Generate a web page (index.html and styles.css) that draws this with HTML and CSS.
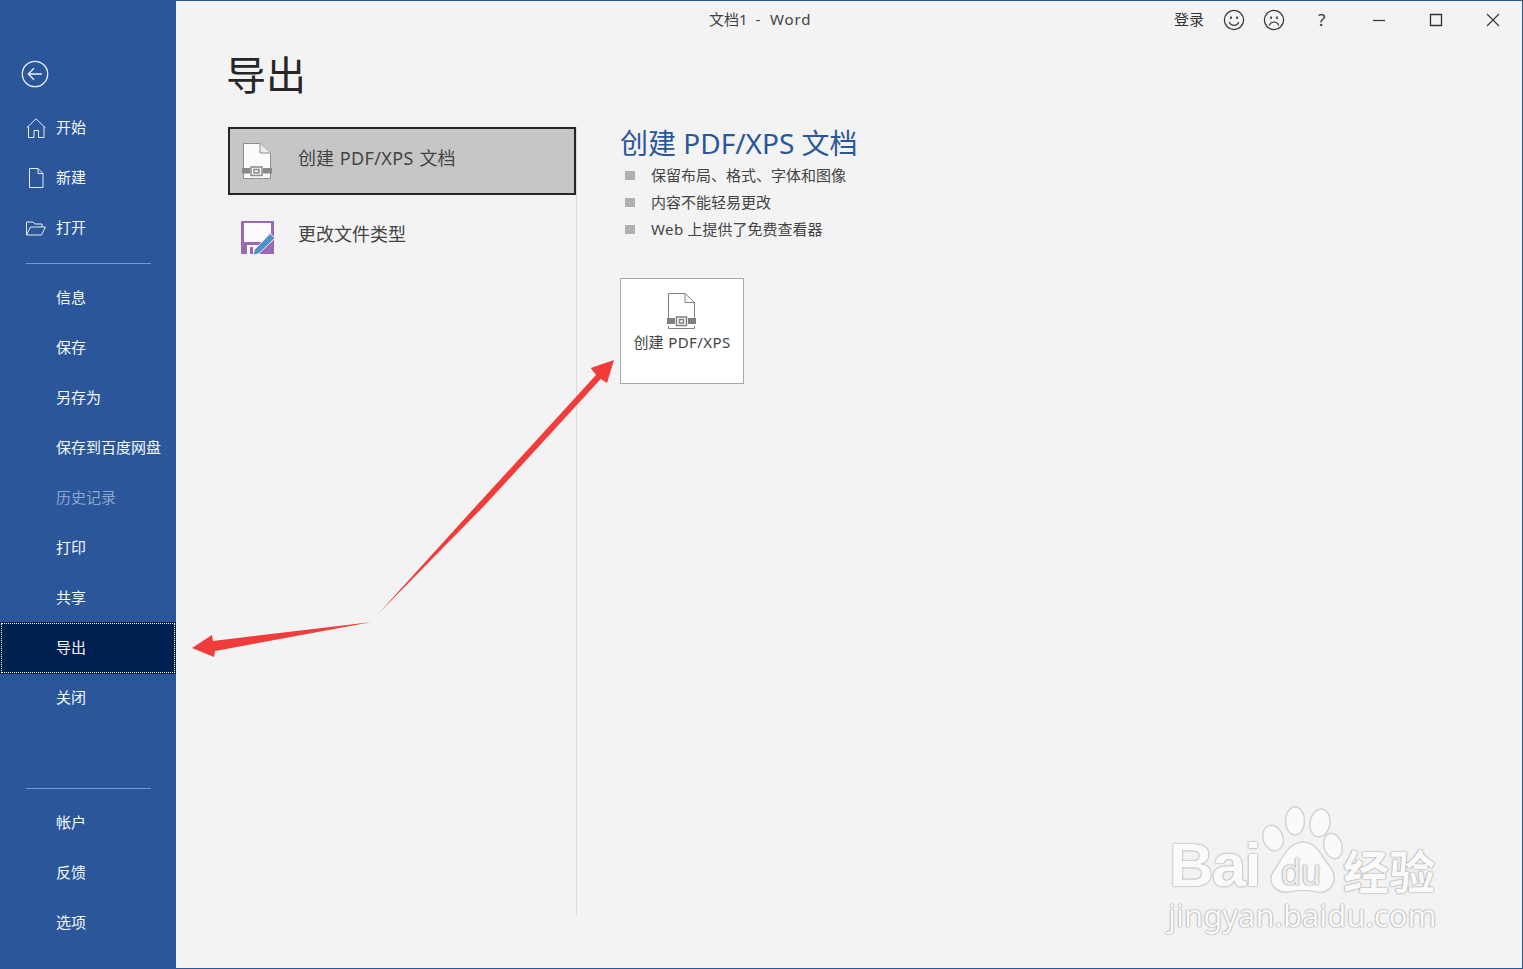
FILE: index.html
```html
<!DOCTYPE html>
<html lang="zh-CN">
<head>
<meta charset="utf-8">
<title>文档1 - Word</title>
<link rel="stylesheet" href="styles.css">
</head>
<body>
<div class="window">
  <aside class="sidebar">
    <div class="back">
      <svg width="28" height="28" viewBox="0 0 28 28" fill="none" stroke="#e8f0fa" stroke-width="1.3"><circle cx="14" cy="14" r="12.7"/><path d="M21 14H7.5M13 8.2 7.3 14l5.7 5.8"/></svg>
    </div>
    <nav class="nav-group">
      <div class="nav-item"><span class="nav-icon"><svg width="22" height="22" viewBox="0 0 22 22" fill="none" stroke="#e4edf8" stroke-width="1"><path d="M1.5 11 11 1.8 20.5 11M3.5 9.5V20.5H9V13.5H13.5V20.5H19V9.5"/></svg></span>开始</div>
      <div class="nav-item"><span class="nav-icon"><svg width="22" height="22" viewBox="0 0 22 22" fill="none" stroke="#e4edf8" stroke-width="1"><path d="M4.5 1.5H13L18 6.5V20.5H4.5ZM13 1.5V6.5H18"/></svg></span>新建</div>
      <div class="nav-item"><span class="nav-icon"><svg width="22" height="22" viewBox="0 0 22 22" fill="none" stroke="#e4edf8" stroke-width="1"><path d="M1.5 18V5H8L10 7H17V10M1.5 18H16.5L20.5 10H5.5Z"/></svg></span>打开</div>
    </nav>
    <div class="divider"></div>
    <nav class="nav-group nav-mid">
      <div class="nav-item">信息</div>
      <div class="nav-item">保存</div>
      <div class="nav-item">另存为</div>
      <div class="nav-item">保存到百度网盘</div>
      <div class="nav-item disabled">历史记录</div>
      <div class="nav-item">打印</div>
      <div class="nav-item">共享</div>
      <div class="nav-item active">导出</div>
      <div class="nav-item">关闭</div>
    </nav>
    <div class="divider divider-low"></div>
    <nav class="nav-group nav-bottom">
      <div class="nav-item">帐户</div>
      <div class="nav-item">反馈</div>
      <div class="nav-item">选项</div>
    </nav>
  </aside>

  <main class="main">
    <header class="titlebar">
      <div class="doc-title">文档1&nbsp; -&nbsp; <span class="word">Word</span></div>
      <div class="controls">
        <span class="signin">登录</span>
        <svg class="ctl face" width="22" height="22" viewBox="0 0 22 22" fill="none" stroke="#333" stroke-width="1.2"><circle cx="11" cy="11" r="9.6"/><path d="M8 7.5v2.6M14 7.5v2.6" stroke-width="1.6"/><path d="M6.2 13c1 2.4 2.8 3.4 4.8 3.4s3.8-1 4.8-3.4"/></svg>
        <svg class="ctl face" width="22" height="22" viewBox="0 0 22 22" fill="none" stroke="#333" stroke-width="1.2"><circle cx="11" cy="11" r="9.6"/><path d="M8 7.5v2.6M14 7.5v2.6" stroke-width="1.6"/><path d="M6.2 16.4c1-2.4 2.8-3.4 4.8-3.4s3.8 1 4.8 3.4"/></svg>
        <span class="help">?</span>
        <svg class="win-btn" width="14" height="14" viewBox="0 0 14 14" fill="none" stroke="#333" stroke-width="1.2"><path d="M1 7.5H13"/></svg>
        <svg class="win-btn" width="14" height="14" viewBox="0 0 14 14" fill="none" stroke="#333" stroke-width="1.3"><path d="M1.5 1.5H12.5V12.5H1.5Z"/></svg>
        <svg class="win-btn" width="14" height="14" viewBox="0 0 14 14" fill="none" stroke="#333" stroke-width="1.1"><path d="M1 1 13 13M13 1 1 13"/></svg>
      </div>
    </header>
    <h1 class="page-title">导出</h1>
    <div class="columns">
      <section class="options">
        <div class="option selected">
          <svg class="opt-icon" width="30" height="36" viewBox="0 0 30 36"><path d="M1.500 .5H18L28.500 10V35.500H1.500Z" fill="#fbfbfb" stroke="#8f8f8f"/><path d="M18 .5V10H28.500" fill="#ececec" stroke="#8f8f8f"/><path d="M0 25H8V30.500H0ZM21 25H30V30.500H21Z" fill="#8a8a8a"/><path d="M9 24H20V32.500H9Z" fill="#fbfbfb" stroke="#8a8a8a" stroke-width="1.500"/><path d="M12 26.500H17V30H12Z" fill="#fbfbfb" stroke="#8a8a8a" stroke-width="1.500"/></svg>
          <span>创建 <span class="latin">PDF/XPS</span> 文档</span>
        </div>
        <div class="option">
          <svg class="opt-icon type-icon" width="36" height="36" viewBox="0 0 36 36"><path d="M1 2a1 1 0 0 1 1-1H33a1 1 0 0 1 1 1V34H2a1 1 0 0 1-1-1Z" fill="#9a68b5"/><path d="M4 3H31V22H4Z" fill="#fbfafc"/><path d="M7 25H20V34H7Z" fill="#fbfafc"/><path d="M10 27H13V34H10Z" fill="#9a68b5"/><path d="M13 35.500 14.500 29.500 30 13.500 35 18 19 33.500Z" fill="#4e90c8" stroke="#f3f3f3"/></svg>
          <span>更改文件类型</span>
        </div>
      </section>
      <section class="detail">
        <h2 class="detail-title">创建 PDF/XPS 文档</h2>
        <ul class="points">
          <li>保留布局、格式、字体和图像</li>
          <li>内容不能轻易更改</li>
          <li><span class="latin">Web</span> 上提供了免费查看器</li>
        </ul>
        <div class="card">
          <svg width="30" height="36" viewBox="0 0 30 36" fill="none"><path d="M1.500 25V.5H18L27.500 9.500V25M1.500 33V35.500H27.500V33" stroke="#808080"/><path d="M18 .5V9.500H27.500" stroke="#808080"/><path d="M0 25H8V31H0ZM21 25H29V31H21Z" fill="#808080"/><path d="M9.500 24H19.500V32.500H9.500Z" stroke="#808080" stroke-width="1.500"/><path d="M12.500 26.500H16.500V30H12.500Z" stroke="#808080" stroke-width="1.500"/></svg>
          <span>创建 <span class="latin">PDF/XPS</span></span>
        </div>
      </section>
    </div>
  </main>
</div>

<svg class="arrows" width="1523" height="969" viewBox="0 0 1523 969">
  <path d="M378 614 477 505 596 375 590.700 368 614 360 607 383 600.700 379 485 505Z" fill="#f23c3c"/>
  <path d="M372 622 213 641 212 635 192 648 214 657 215 651Z" fill="#f23c3c"/>
</svg>

<div class="watermark">
  <div class="wm-top">
    <span class="wm-bai">Bai</span>
    <svg class="wm-paw" width="82" height="96" viewBox="0 0 82 96">
      <g fill="#fafafa" stroke="#d4d4d4" stroke-width="1.500">
        <ellipse cx="12" cy="32" rx="10" ry="13" transform="rotate(-18 12 32)"/>
        <ellipse cx="34" cy="15" rx="9.500" ry="14"/>
        <ellipse cx="59" cy="17" rx="10" ry="14" transform="rotate(10 59 17)"/>
        <ellipse cx="72" cy="40" rx="9" ry="13" transform="rotate(-15 72 40)"/>
        <path d="M42 36C56 36 60 50 70 62 78 74 70 88 56 86 48 84 36 84 28 86 14 88 6 76 12 66 20 56 26 36 42 36Z"/>
      </g>
    </svg>
    <span class="wm-du">du</span>
    <span class="wm-cn">经验</span>
  </div>
  <div class="wm-url">jingyan.baidu.com</div>
</div>
</body>
</html>
```
FILE: styles.css
```css
* { box-sizing: border-box; }
html, body { margin: 0; padding: 0; height: 100%; overflow: hidden; }
body {
  background: #f3f3f3;
  font-family: "Noto Sans", "Noto Sans CJK SC", sans-serif;
  color: #333;
  position: relative;
}
.window { display: flex; height: 969px; border: 1px solid #2b579a; border-width: 1px 1px 1px 0; }
.sidebar {
  width: 176px;
  flex: none;
  background: #2b579a;
  color: #fff;
  font-size: 15px;
  margin-top: -1px;
  margin-bottom: -1px;
}
.back { padding: 60px 0 0 21px; height: 102px; }
.back svg { display: block; }
.nav-item {
  height: 50px;
  display: flex;
  align-items: center;
  padding: 0 0 0 56px;
  position: relative;
  line-height: 1;
  white-space: nowrap;
  color: #f4f7fb;
}
.nav-icon { position: absolute; left: 25px; top: 15px; width: 22px; height: 22px; }
.nav-icon svg { display: block; }
.divider { height: 1px; margin: 11px 25px 8px 26px; background: #6f9ad8; }
.divider-low { margin: 66px 25px 8px 26px; }
.disabled { color: #8fa6cc; }
.active {
  height: 52px;
  margin-bottom: -2px;
  padding-bottom: 2px;
  background: #002050;
  outline: 1px dotted #fff;
  outline-offset: -2px;
}
.main { flex: 1; min-width: 0; display: flex; flex-direction: column; }
.titlebar { height: 38px; position: relative; display: flex; justify-content: flex-end; flex: none; }
.doc-title { position: absolute; left: 533px; top: 8px; font-size: 15px; line-height: 20px; color: #444; }
.word { letter-spacing: .9px; margin-left: 2px; }
.controls { display: flex; align-items: center; height: 38px; font-size: 15px; padding-right: 22px; color: #333; }
.signin { margin-right: 19px; margin-left: -1px; padding-bottom: 3px; }
.ctl { margin-right: 18px; }
.help { width: 12px; margin: 0 42px 0 15px; font-size: 17px; padding-bottom: 2px; }
.win-btn { margin-right: 43px; }
.win-btn:last-child { margin-right: 0; }
.page-title { margin: 11px 0 0 50px; font-size: 40px; line-height: 50px; font-weight: 400; color: #262626; height: 50px; }
.columns { display: flex; margin: 27px 0 0 52px; }
.options { width: 349px; height: 788px; border-right: 1px solid #d9d9d9; }
.option {
  width: 348px;
  height: 68px;
  display: flex;
  align-items: center;
  font-size: 18px;
  word-spacing: 1px;
  color: #444;
  position: relative;
  padding: 0 0 9px 70px;
}
.latin { letter-spacing: .4px; }
.option + .option { margin-top: 8px; }
.selected { background: #c6c6c6; border: 2px solid #262626; padding-left: 68px; }
.opt-icon { position: absolute; left: 12px; top: 14px; }
.type-icon { left: 12px; top: 17px; }
.detail { margin-left: 43px; }
.detail-title { margin: 0; font-size: 28px; line-height: 32px; font-weight: 400; color: #2b579a; white-space: nowrap; }
.points { list-style: none; margin: 3px 0 0; padding: 0; font-size: 15px; color: #444; }
.points li { height: 27px; line-height: 27px; position: relative; padding-left: 31px; }
.points li::before { content: ""; position: absolute; left: 5px; top: 9px; width: 10px; height: 9px; background: #b0b0b0; }
.card {
  margin-top: 35px;
  width: 124px;
  height: 106px;
  background: #fff;
  border: 1px solid #a8a8a8;
  display: flex;
  flex-direction: column;
  align-items: center;
  padding-top: 14px;
  font-size: 15px;
  color: #444;
  white-space: nowrap;
  word-spacing: 1px;
}
.card span { margin-top: 3px; line-height: 20px; }
.card .latin { margin-top: 0; }
.arrows { position: absolute; left: 0; top: 0; pointer-events: none; }
.watermark { position: absolute; left: 1168px; top: 806px; width: 280px; color: #fafafa; }
.wm-top { position: relative; height: 96px; }
.wm-bai, .wm-du, .wm-cn, .wm-url {
  position: absolute;
  white-space: nowrap;
  text-shadow: 0 0 2px #999, 0 0 1px #888;
}
.wm-bai { left: 1px; top: 34px; font: 700 62px/50px "Liberation Sans", sans-serif; letter-spacing: -2px; }
.wm-paw { position: absolute; left: 93px; top: 0; }
.wm-du { left: 113px; top: 52px; font: 400 36px/30px "Liberation Sans", sans-serif; color: #eee; }
.wm-cn { left: 175px; top: 41px; font: 700 46px/44px "Noto Sans CJK SC", sans-serif; }
.wm-url { left: 0; top: 94px; font: 400 31px/30px "Noto Sans", sans-serif; }
```
